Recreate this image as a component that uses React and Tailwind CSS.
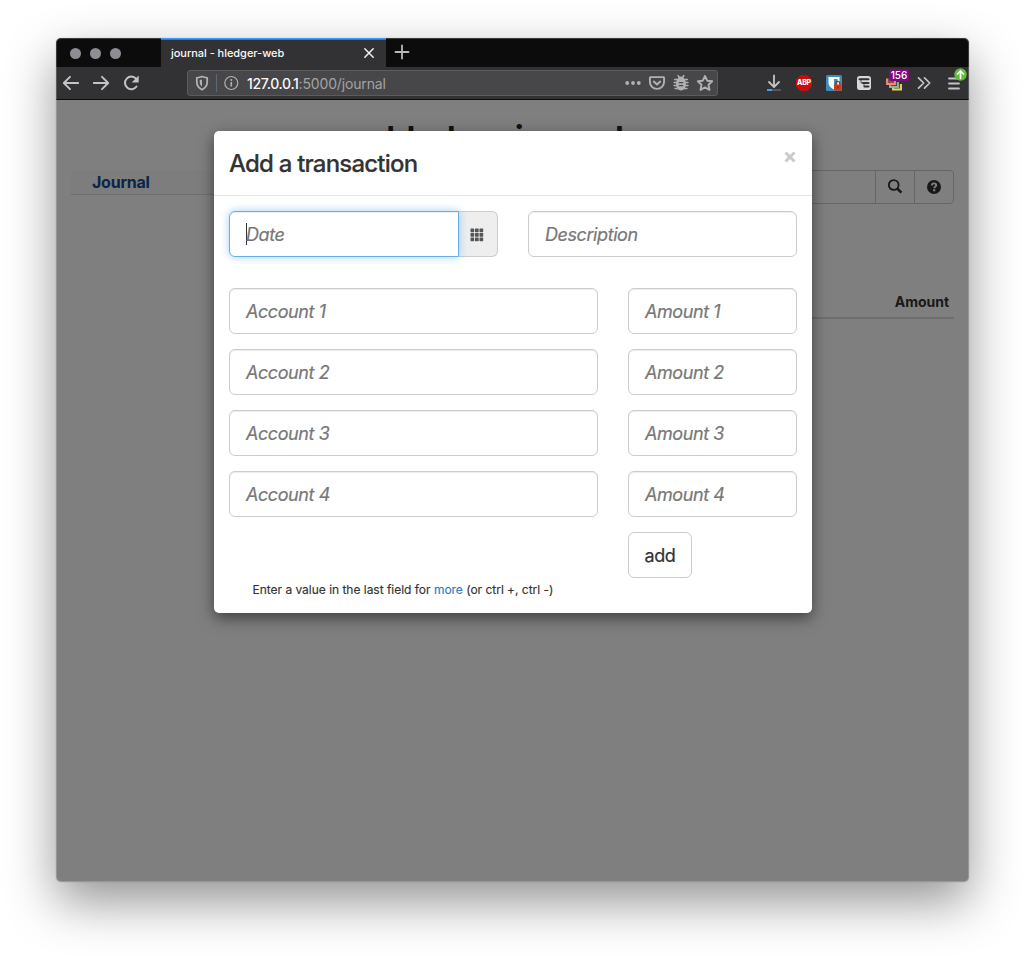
import React from "react";

function TabStrip() {
  return (
    <div className="flex h-[29px] bg-[#0c0c0d]">
      <div className="flex w-[105px] items-center gap-[9px] pt-px pl-[13.5px]">
        <i className="size-[11px] rounded-full bg-[#8e8d93]" />
        <i className="size-[11px] rounded-full bg-[#8e8d93]" />
        <i className="size-[11px] rounded-full bg-[#8e8d93]" />
      </div>
      <div className="flex w-[225px] items-center justify-between border-t-2 border-[#0a84ff] bg-[#323234] pr-[11px] pl-[10px] text-[11px] font-medium text-[#f9f9fa]">
        <span className="whitespace-nowrap tracking-[-0.04px]">journal - hledger-web</span>
        <svg width="12" height="12" viewBox="0 0 12 12" className="-mt-px" stroke="#f0f0f1" strokeWidth="1.5" strokeLinecap="round">
          <path d="M1.8 1.8l8.4 8.4M10.2 1.8l-8.4 8.4" />
        </svg>
      </div>
      <svg width="32" height="28" viewBox="0 0 32 28" stroke="#b9b9ba" strokeWidth="1.8" strokeLinecap="round">
        <path d="M9.5 14h13M16 7.500v13" />
      </svg>
    </div>
  );
}

function Slot({ children }) {
  return <div className="flex h-full w-[30px] items-center justify-center">{children}</div>;
}

function AddressBar() {
  return (
    <div className="flex h-[26px] w-[531px] items-center rounded-[3px] border border-[#5c5c5e] bg-[#474749]">
      <svg width="28" height="24" viewBox="0 0 28 24" fill="none" stroke="#b1b1b3" strokeWidth="1.8" strokeLinejoin="round">
        <path d="M14 5.500c2 .9 3.600 1.100 5.200 1.300v4.200c0 3.600-2 6-5.200 7.700-3.200-1.700-5.200-4.100-5.200-7.700V6.800c1.600-.2 3.200-.4 5.200-1.300z" />
        <path d="M14 8.500c-.9.300-1.600.5-2.300.6V11c0 2 .9 3.500 2.300 4.500z" fill="#b1b1b3" stroke="none" />
      </svg>
      <div className="h-[18px] w-px bg-[#5d6878]" />
      <svg width="29" height="24" viewBox="0 0 29 24" fill="none" stroke="#b1b1b3" strokeWidth="1.200">
        <circle cx="14.300" cy="12" r="6.500" />
        <path d="M14.300 11v4.500" strokeWidth="1.600" />
        <circle cx="14.300" cy="8.900" r="1" fill="#b1b1b3" stroke="none" />
      </svg>
      <div className="ml-px flex-1 pt-[2px] whitespace-nowrap text-[14px] leading-5 text-[#a3a3a5]">
        <span className="font-medium tracking-[-0.33px] text-[#f9f9fa]">127.0.0.1</span>
        <span className="tracking-[-0.16px]">:5000/journal</span>
      </div>
      <svg width="24" height="24" viewBox="0 0 24 24" fill="#b1b1b3">
        <circle cx="6.200" cy="12" r="1.900" /><circle cx="12" cy="12" r="1.900" /><circle cx="17.800" cy="12" r="1.900" />
      </svg>
      <svg width="24" height="24" viewBox="0 0 24 24" fill="none" stroke="#b1b1b3" strokeWidth="1.900" strokeLinecap="round" strokeLinejoin="round">
        <path d="M5.600 6.100h12.800c.4 0 .7.300.7.700v4c0 4-3.200 7.100-7.100 7.100s-7.100-3.100-7.100-7.100v-4c0-.4.300-.7.700-.7z" />
        <path d="M8.800 10.600l3.200 3 3.200-3" strokeWidth="2" />
      </svg>
      <svg width="24" height="24" viewBox="0 0 24 24" fill="none" stroke="#b1b1b3" strokeWidth="1.300" strokeLinecap="round">
        <path d="M5.500 8.500h13M5 11.500h14M5 14.500h14M6 17.500h12M9 4.500l1.500 2M15 4.500l-1.500 2" />
        <path d="M12 5.500c2.200 0 3.200 1.300 3.200 2.500 1.300 1 1.700 2.500 1.700 4.500 0 4-1.900 7-4.900 7s-4.900-3-4.900-7c0-2 .4-3.500 1.700-4.500 0-1.200 1-2.500 3.200-2.500z" fill="#b1b1b3" stroke="none" />
        <path d="M10.300 11.700h3.400M10.300 14.700h3.400" stroke="#474749" />
      </svg>
      <svg width="24" height="24" viewBox="0 0 24 24" fill="none" stroke="#b1b1b3" strokeWidth="1.900" strokeLinejoin="round">
        <path d="M12 5l2.200 4.700 5 .6-3.700 3.500 1 5.100-4.500-2.500-4.500 2.500 1-5.100-3.700-3.500 5-.6z" />
      </svg>
    </div>
  );
}

function Toolbar() {
  return (
    <div className="flex h-[33px] items-center border-b border-[#0c0c0d] bg-[#323234]">
      <Slot>
        <svg width="18" height="18" viewBox="0 0 18 18" fill="none" stroke="#c4c4c5" strokeWidth="1.900" strokeLinecap="round" strokeLinejoin="round">
          <path d="M16.200 9H2M8 2.800L1.800 9 8 15.200" />
        </svg>
      </Slot>
      <Slot>
        <svg width="18" height="18" viewBox="0 0 18 18" fill="none" stroke="#c4c4c5" strokeWidth="1.900" strokeLinecap="round" strokeLinejoin="round">
          <path d="M1.800 9H16M10 2.800L16.200 9 10 15.200" />
        </svg>
      </Slot>
      <Slot>
        <svg width="18" height="18" viewBox="0 0 18 18" fill="none" stroke="#c4c4c5" strokeWidth="2" strokeLinecap="round">
          <path d="M14.500 12.500A6.300 6.300 0 1 1 14 4.700" />
          <path d="M16.700 1.500v7h-7z" fill="#c4c4c5" stroke="none" />
        </svg>
      </Slot>
      <div className="w-[41px]" />
      <AddressBar />
      <div className="ml-auto flex h-full">
        <Slot>
          <svg width="18" height="20" viewBox="0 0 18 20" fill="none">
            <path d="M9 2.500v11M4 9l5 5 5-5" stroke="#c4c4c5" strokeWidth="1.800" strokeLinecap="round" strokeLinejoin="round" />
            <path d="M7 17h9" stroke="#56565a" strokeWidth="2" />
            <path d="M2 17h5" stroke="#3fa0f5" strokeWidth="2" />
          </svg>
        </Slot>
        <Slot>
          <div className="grid size-4 place-items-center bg-[#c90d0d] text-[7px] font-extrabold tracking-[-0.2px] text-white [clip-path:polygon(30%_0,70%_0,100%_30%,100%_70%,70%_100%,30%_100%,0_70%,0_30%)]">ABP</div>
        </Slot>
        <Slot>
          <svg width="16" height="16" viewBox="0 0 16 16">
            <rect width="16" height="16" rx="1.500" fill="#3c8dbc" />
            <path d="M2.500 2h11v6c0 3-2.300 5-5.500 6.500C4.800 13 2.500 11 2.500 8z" fill="#fff" />
            <path d="M8 4h3.500v4c0 1.800-1.500 3.200-3.500 4.300z" fill="#3c8dbc" />
            <rect x="8" y="9.500" width="7.500" height="6" rx=".8" fill="#d33a0c" />
            <path d="M9.800 9.500V8.400a2 2 0 0 1 4 0v1.100" fill="none" stroke="#a82f0a" strokeWidth="1.300" />
            <rect x="11.200" y="11.500" width="1.200" height="2" fill="#7d2508" />
          </svg>
        </Slot>
        <Slot>
          <svg width="16" height="16" viewBox="0 0 16 16">
            <rect x="1" y="1" width="14" height="14" rx="2.800" fill="#d7d7db" />
            <path d="M3.500 4.300h9M7 8h5.500M8.500 11.600h4" stroke="#323234" strokeWidth="2" strokeLinecap="round" />
            <path d="M5 5v3h2M8 8.500v3.100" stroke="#323234" strokeWidth=".8" fill="none" />
          </svg>
        </Slot>
        <div className="relative flex h-full w-[30px] items-center justify-center">
          <svg width="16" height="16" viewBox="0 0 16 16" fill="none" strokeWidth="1.900">
            <path d="M7 10v4.500h8V9" fill="#5b5330" stroke="#f0d264" />
            <path d="M4 7v5h8V7" fill="#3f5548" stroke="#87b69b" />
            <path d="M1 3.500V9h8V3.500" fill="#8a4c46" stroke="#f08b78" />
          </svg>
          <span className="absolute top-[2px] left-[10px] grid h-[12px] w-[20px] place-items-center rounded-[2px] bg-[#7f0a80] text-[10px] font-medium leading-none text-white">156</span>
        </div>
        <Slot>
          <svg width="16" height="16" viewBox="0 0 16 16" fill="none" stroke="#c4c4c5" strokeWidth="1.700" strokeLinecap="round" strokeLinejoin="round">
            <path d="M2.500 2.800L7.700 8l-5.200 5.200M8.500 2.800L13.700 8l-5.200 5.200" />
          </svg>
        </Slot>
        <div className="relative flex h-full w-[30px] items-center justify-center">
          <svg width="14" height="14" viewBox="0 0 14 14" stroke="#c4c4c5" strokeWidth="1.800" strokeLinecap="round">
            <path d="M2 2.500h10M2 7.500h10M2 12.500h10" />
          </svg>
          <svg width="13" height="13" viewBox="0 0 13 13" className="absolute top-[1px] left-[15px]">
            <circle cx="6.500" cy="6.500" r="6.200" fill="#65bb3c" />
            <path d="M6.500 10.300V3M3.500 6l3-3 3 3" fill="none" stroke="#fff" strokeWidth="1.700" strokeLinecap="round" />
          </svg>
        </div>
      </div>
    </div>
  );
}

function JournalPage() {
  return (
    <div className="flex h-full flex-col px-[15px] pt-[15px] text-[#333]">
      <h1 className="h-[55px] pt-[4px] pl-[315px] text-[36px] leading-[40px] font-semibold tracking-[-1.75px] whitespace-nowrap text-[#222]">hledger.journal</h1>
      <div className="flex justify-between">
        <div className="flex h-[25px] w-[220px] items-center border-b border-[#dddddd] bg-[#fafafa] pl-[21px] text-[16px] font-bold tracking-[-0.25px] text-[#144a8e]">Journal</div>
        <div className="flex h-[34px] w-[641px] rounded-[4px] border border-[#ccc]">
          <div className="flex-1" />
          <div className="flex w-[39px] items-center justify-center border-l border-[#ccc]">
            <svg width="16" height="16" viewBox="0 0 16 16" fill="none" stroke="#333" strokeWidth="1.9">
              <circle cx="6.700" cy="6" r="4.900" /><path d="M10.200 9.500l4.200 4.200" strokeWidth="2.600" />
            </svg>
          </div>
          <div className="flex w-[39px] items-center justify-center border-l border-[#ccc]">
            <svg width="14" height="14" viewBox="0 0 14 14" className="-mt-px">
              <circle cx="7" cy="7" r="7" fill="#333" />
              <path d="M4.900 5.500c0-1.400.8-2.100 2.100-2.100s2.200.7 2.200 1.900c0 1.500-2 1.400-2 3" fill="none" stroke="#fff" strokeWidth="1.900" />
              <path d="M6.100 9.300h2.200v1.900H6.100z" fill="#fff" />
            </svg>
          </div>
        </div>
      </div>
      <div className="mt-[84px] ml-auto h-[31px] w-[641px] border-b-2 border-[#ddd] pt-[4px] pr-[5px] text-right text-[14px] leading-5 font-bold tracking-[-0.04px]">Amount</div>
    </div>
  );
}

function Field({ label, className }) {
  return (
    <div className={"flex h-[46px] items-center rounded-[6px] border border-[#ccc] bg-white px-4 text-[18px] text-[#777] italic shadow-[inset_0_1px_1px_rgba(0,0,0,0.075)] " + className}>
      <span className="whitespace-nowrap tracking-[-0.42px] [-webkit-text-stroke:0.2px_#777]">{label}</span>
    </div>
  );
}

function TransactionModal() {
  return (
    <div className="h-[482px] w-[598px] rounded-[5px] bg-white text-[#333] shadow-[0_5px_15px_rgba(0,0,0,0.5)]">
      <div className="flex h-[65px] justify-between border-b border-[#e5e5e5] pr-[16px] pl-[15px]">
        <h3 className="pt-[17px] text-[24px] leading-8 font-medium tracking-[-0.8px] whitespace-nowrap [-webkit-text-stroke:0.2px_#333]">Add a transaction</h3>
        <svg width="12" height="12" viewBox="0 0 12 12" className="mt-[20px]" stroke="#cbcbcb" strokeWidth="3">
          <path d="M1.500 1.500l9 9M10.500 1.500l-9 9" />
        </svg>
      </div>
      <div className="px-[15px] pt-[15px]">
        <div className="flex gap-[30px]">
          <div className="flex w-[269px]">
            <div className="z-10 flex h-[46px] w-[230px] items-center rounded-l-[6px] border border-[#66afe9] bg-white pl-4 text-[18px] text-[#777] italic shadow-[inset_0_1px_1px_rgba(0,0,0,0.075),0_0_8px_rgba(102,175,233,0.6)]">
              <span className="h-[22px] w-px bg-[#333]" />
              <span className="-ml-px tracking-[-0.42px] [-webkit-text-stroke:0.2px_#777]">Date</span>
            </div>
            <div className="flex h-[46px] w-[39px] items-center justify-center rounded-r-[6px] border border-l-0 border-[#ccc] bg-[#eee]">
              <svg width="14" height="14" viewBox="0 0 14 14" fill="#555" className="mt-[2px] -ml-[2px]">
                <rect x=".5" y=".5" width="3.700" height="3.700" rx=".6" /><rect x="5" y=".5" width="3.700" height="3.700" rx=".6" /><rect x="9.500" y=".5" width="3.700" height="3.700" rx=".6" />
                <rect x=".5" y="5" width="3.700" height="3.700" rx=".6" /><rect x="5" y="5" width="3.700" height="3.700" rx=".6" /><rect x="9.500" y="5" width="3.700" height="3.700" rx=".6" />
                <rect x=".5" y="9.500" width="3.700" height="3.700" rx=".6" /><rect x="5" y="9.500" width="3.700" height="3.700" rx=".6" /><rect x="9.500" y="9.500" width="3.700" height="3.700" rx=".6" />
              </svg>
            </div>
          </div>
          <Field label="Description" className="w-[269px]" />
        </div>
        <div className="mt-[31px] flex flex-col gap-[15px]">
          {[1, 2, 3, 4].map((n) => (
            <div key={n} className="flex gap-[30px]">
              <Field label={`Account ${n}`} className="w-[369px]" />
              <Field label={`Amount ${n}`} className="w-[169px]" />
            </div>
          ))}
        </div>
        <button className="mt-[15px] ml-[399px] flex h-[46px] w-[64px] items-center justify-center rounded-[6px] border border-[#ccc] text-[18px] tracking-[-0.4px] [-webkit-text-stroke:0.2px_#333]">add</button>
        <p className="mt-[3px] pl-[23.500px] text-[12px] leading-[18px] tracking-[-0.02px] whitespace-nowrap [-webkit-text-stroke:0.15px_currentColor]">
          Enter a value in the last field for <a className="text-[#337ab7]">more</a> (or ctrl +, ctrl -)
        </p>
      </div>
    </div>
  );
}

export default function App() {
  return (
    <div className="h-[956px] w-[1025px] overflow-hidden bg-white pt-[38px] pl-[56px] font-['Inter',sans-serif]">
      <div className="h-[844px] w-[913px] rounded-[5px] shadow-[0_0_1px_rgba(0,0,0,0.4),0_20px_50px_rgba(0,0,0,0.42)]">
        <div className="relative h-full overflow-hidden rounded-[5px] bg-white">
          <TabStrip />
          <Toolbar />
          <div className="relative h-[782px]">
            <JournalPage />
            <div className="absolute inset-0 flex items-start justify-center bg-black/50 pt-[31px] pl-px">
              <TransactionModal />
            </div>
          </div>
          <div className="pointer-events-none absolute inset-0 rounded-[5px] border border-white/20" />
        </div>
      </div>
    </div>
  );
}
